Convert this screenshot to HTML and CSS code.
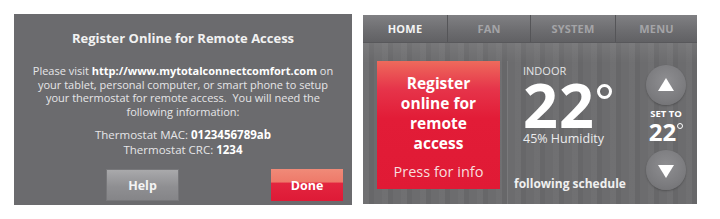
FILE: index.html
```html
<!DOCTYPE html>
<html>
<head>
<meta charset="utf-8">
<link rel="stylesheet" href="styles.css">
</head>
<body>
<div class="page">
  <section class="panel-left">
    <h1 class="title">Register Online for Remote Access</h1>
    <p class="msg">Please visit <b>http://www.mytotalconnectcomfort.com</b> on<br>your tablet, personal computer, or smart phone to setup<br>your thermostat for remote access.&nbsp; You will need the<br>following information:</p>
    <p class="codes">Thermostat MAC: <b>0123456789ab</b><br>Thermostat CRC: <b>1234</b></p>
    <div class="btn-row">
      <div class="btn btn-help">Help</div>
      <div class="btn btn-done">Done</div>
    </div>
  </section>
  <section class="panel-right">
    <nav class="tabs">
      <div class="tab tab-active">HOME</div>
      <div class="tab">FAN</div>
      <div class="tab">SYSTEM</div>
      <div class="tab">MENU</div>
    </nav>
    <div class="home">
      <div class="reg-box">
        <div class="reg-main">Register<br>online for<br>remote<br>access</div>
        <div class="reg-info">Press for info</div>
      </div>
      <div class="indoor">
        <div class="indoor-label">INDOOR</div>
        <div class="indoor-temp"><span class="big-num">22</span><span class="deg"></span></div>
        <div class="humidity">45% Humidity</div>
        <div class="schedule">following schedule</div>
      </div>
      <div class="setpoint">
        <div class="arrow-btn"><span class="tri tri-up"></span></div>
        <div class="set-label">SET TO</div>
        <div class="set-temp">22<span class="deg-small"></span></div>
        <div class="arrow-btn"><span class="tri tri-down"></span></div>
      </div>
    </div>
  </section>
</div>
</body>
</html>
```
FILE: styles.css
```css
* { box-sizing: border-box; margin: 0; padding: 0; }
body { background: #fff; font-family: "Open Sans", "DejaVu Sans", sans-serif; }
.page { display: flex; align-items: flex-start; padding: 14px 0 0 14px; gap: 11px; }

.panel-left {
  width: 338px; height: 191px; background: #6b6b6e;
  display: flex; flex-direction: column; align-items: center;
  color: #e6e6e8; text-align: center;
}
.title { font-size: 13px; font-weight: 700; line-height: 16px; color: #f2f2f2; margin-top: 16px; }
.msg { font-size: 11px; line-height: 13.5px; margin-top: 18px; }
.msg b, .codes b { color: #fff; font-weight: 700; }
.codes { font-size: 11.5px; line-height: 15px; margin-top: 9px; }
.btn-row { display: flex; width: 100%; padding: 0 9px 0 93px; justify-content: space-between; align-items: center; margin-top: 12px; }
.btn { display: flex; align-items: center; justify-content: center; color: #fff; font-weight: 700; font-size: 12.5px; }
.btn-help {
  width: 71px; height: 30px;
  background: linear-gradient(#a9a9ab, #8f8f92 55%, #858588);
  box-shadow: 0 0 0 1px #77777a; color: #f4f4f4;
}
.btn-done {
  width: 72px; height: 32px;
  background: linear-gradient(#f08a78 0%, #ee7a6a 40%, #e3253f 45%, #de1a36 100%);
}

.panel-right {
  width: 334px; height: 189px; margin-top: 1px;
  background:
    repeating-linear-gradient(90deg, rgba(255,255,255,0.04) 0 6px, rgba(0,0,0,0.03) 6px 11px, rgba(255,255,255,0.015) 11px 19px),
    #6a6a6c;
  display: flex; flex-direction: column;
}
.tabs {
  display: grid; grid-template-columns: 84px 83px 85px 82px; height: 28px;
  background: linear-gradient(#808083, #6c6c6f 60%, #616164);
  border-bottom: 1px solid #58585b;
}
.tab {
  display: flex; align-items: center; justify-content: center;
  font-size: 11px; font-weight: 700; color: #a4a4a7; letter-spacing: 0.2px;
  border-left: 1px solid #555558;
}
.tab:first-child { border-left: none; }
.tab-active { color: #f4f4f4; }

.home {
  flex: 1; display: grid; grid-template-columns: 123px 1fr 56px;
  padding: 18px 3px 0 14px;
  background: linear-gradient(rgba(255,255,255,0.08), rgba(255,255,255,0) 20px);
}
.reg-box {
  height: 128px; color: #fff; text-align: center;
  background: linear-gradient(#ee6a5c 0%, #e6344a 22%, #e21c37 45%, #e01a35 100%);
  display: flex; flex-direction: column; align-items: center;
}
.reg-main { font-size: 15.5px; font-weight: 700; line-height: 20px; margin-top: 12px; }
.reg-info { font-size: 14.5px; line-height: 20px; margin-top: 9px; color: #f8dede; }

.indoor {
  margin-left: 7px; border-left: 1px solid rgba(255,255,255,0.09);
  display: flex; flex-direction: column; color: #fff;
}
.indoor-label { font-size: 11px; line-height: 13px; color: #e4e4e6; margin: 3px 0 0 15px; }
.indoor-temp { display: flex; align-items: flex-start; height: 50px; margin: 2px 0 0 15px; }
.big-num { font-size: 61px; font-weight: 700; line-height: 52px; letter-spacing: 1px; }
.deg { width: 15px; height: 15px; border: 3px solid #fff; border-radius: 50%; margin: 5px 0 0 2px; }
.humidity { font-size: 12.5px; line-height: 16px; color: #ececee; margin: 2px 0 0 15px; }
.schedule { font-size: 12px; font-weight: 700; line-height: 16px; color: #f0f0f0; margin: 29px 0 0 6px; }

.setpoint { display: flex; flex-direction: column; align-items: center; color: #fff; padding-top: 4px; }
.arrow-btn {
  width: 40px; height: 40px; border-radius: 50%;
  background: radial-gradient(circle at 50% 40%, #8e8e91 0%, #7c7c7f 60%, #6d6d70 100%);
  display: flex; align-items: center; justify-content: center;
  box-shadow: 0 1px 2px rgba(0,0,0,0.25);
}
.tri { width: 0; height: 0; border-left: 8px solid transparent; border-right: 8px solid transparent; }
.tri-up { border-bottom: 13px solid #fff; margin-top: -2px; }
.tri-down { border-top: 13px solid #fff; margin-top: 2px; }
.set-label { font-size: 9.5px; font-weight: 700; line-height: 12px; margin-top: 3px; }
.set-temp { font-size: 24px; font-weight: 700; line-height: 24px; margin-bottom: 6px; display: flex; align-items: flex-start; }
.deg-small { width: 6px; height: 6px; border: 1px solid #fff; border-radius: 50%; margin: 3px 0 0 1px; }
```
